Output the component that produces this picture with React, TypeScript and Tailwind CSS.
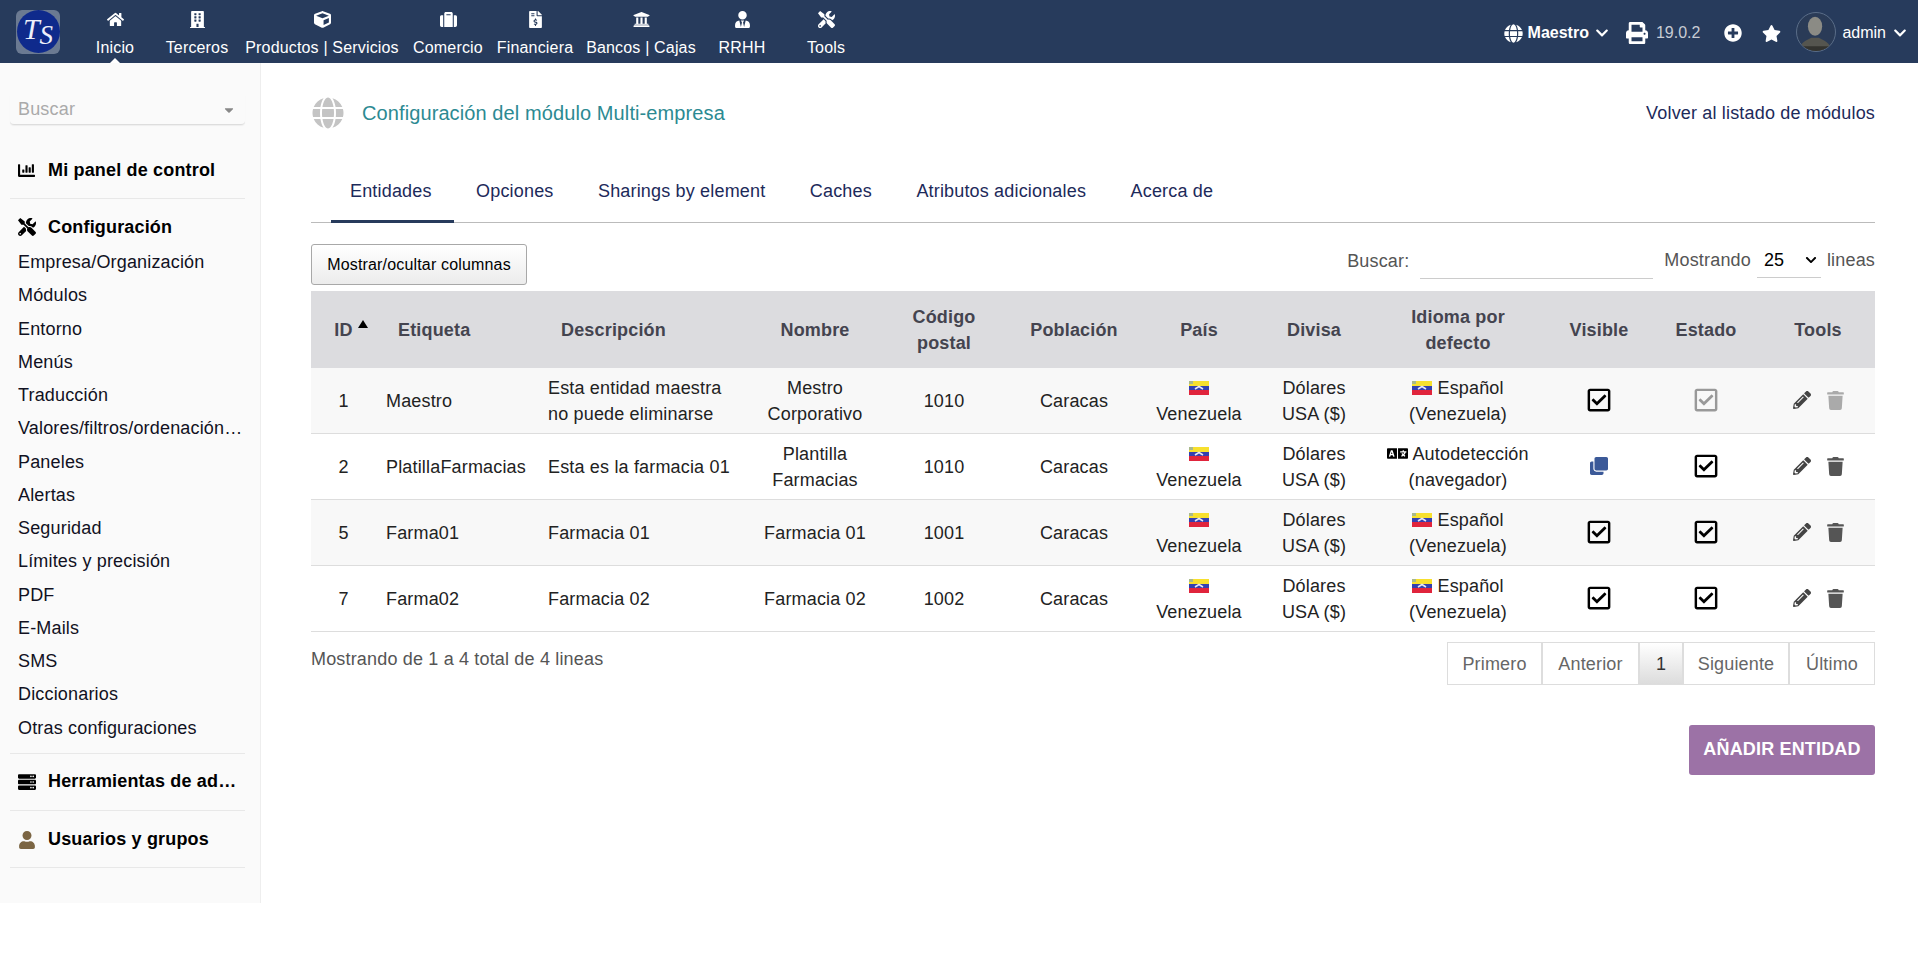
import {
  FaHome, FaBuilding, FaCube, FaSuitcase, FaFileInvoiceDollar, FaUniversity, FaUserTie, FaTools,
  FaGlobe, FaChevronDown, FaPrint, FaPlusCircle, FaStar, FaChartBar, FaServer, FaUser,
  FaCaretDown, FaRegCheckSquare, FaClone, FaPencilAlt, FaTrash, FaLanguage,
} from "react-icons/fa";

const navItems = [
  { label: "Inicio", icon: FaHome, w: "w-[82px]", active: true },
  { label: "Terceros", icon: FaBuilding, w: "w-[82px]" },
  { label: "Productos | Servicios", icon: FaCube, w: "w-[168px]" },
  { label: "Comercio", icon: FaSuitcase, w: "w-[84px]" },
  { label: "Financiera", icon: FaFileInvoiceDollar, w: "w-[90px]" },
  { label: "Bancos | Cajas", icon: FaUniversity, w: "w-[122px]" },
  { label: "RRHH", icon: FaUserTie, w: "w-[80px]" },
  { label: "Tools", icon: FaTools, w: "w-[88px]" },
];

const configLinks = [
  "Empresa/Organización", "Módulos", "Entorno", "Menús", "Traducción", "Valores/filtros/ordenación/búsqueda",
  "Paneles", "Alertas", "Seguridad", "Límites y precisión", "PDF", "E-Mails", "SMS", "Diccionarios", "Otras configuraciones",
];

const tabs = ["Entidades", "Opciones", "Sharings by element", "Caches", "Atributos adicionales", "Acerca de"];

const rows = [
  { id: 1, label: "Maestro", desc: "Esta entidad maestra no puede eliminarse", name: "Mestro Corporativo", zip: "1010", lang: "es", visible: "check", estado: "off", locked: true },
  { id: 2, label: "PlatillaFarmacias", desc: "Esta es la farmacia 01", name: "Plantilla Farmacias", zip: "1010", lang: "auto", visible: "clone", estado: "check", locked: false },
  { id: 5, label: "Farma01", desc: "Farmacia 01", name: "Farmacia 01", zip: "1001", lang: "es", visible: "check", estado: "check", locked: false },
  { id: 7, label: "Farma02", desc: "Farmacia 02", name: "Farmacia 02", zip: "1002", lang: "es", visible: "check", estado: "check", locked: false },
];

const Flag = () => (
  <svg width="20" height="14" viewBox="0 0 20 14" className="inline-block align-[-1px]">
    <rect width="20" height="5" fill="#f7e02e" />
    <rect y="5" width="20" height="4" fill="#3340b0" />
    <rect y="9" width="20" height="5" fill="#e0243c" />
    <rect x="0" y="0" width="4" height="3" fill="#a9b98a" />
    <path d="M6 8 L10 5.5 L14 8" stroke="#e8e8f4" strokeWidth="1.5" fill="none" />
  </svg>
);

const Logo = () => (
  <div className="flex h-11 w-11 items-center justify-center rounded-md bg-[#6b7a92]">
    <div className="flex h-[43px] w-[43px] items-center justify-center rounded-full bg-[#0f2a8c] font-['Liberation_Serif',serif] italic leading-none tracking-normal text-[#eef0fa]">
      <span className="-mt-[6px] text-[30px]">T</span>
      <span className="mt-[8px] text-[27px]">S</span>
    </div>
  </div>
);

const Avatar = () => (
  <div className="h-10 w-10 overflow-hidden rounded-full border border-[#5a6d88] bg-[#2a3b57]">
    <svg viewBox="0 0 40 40" className="h-full w-full">
      <ellipse cx="19" cy="14" rx="7.5" ry="10" fill="#8b8b85" />
      <path d="M3 40 C3 30 10 29 15 26 L23 26 C28 29 35 30 36 40 Z" fill="#55554f" />
      <rect x="3" y="35" width="33" height="5" fill="#33332f" />
    </svg>
  </div>
);

const Sidebar = () => (
  <aside className="h-[840px] w-[261px] shrink-0 border-r border-[#eeeeee] bg-[#fafafa] px-[10px] pt-[32px]">
    <div className="flex h-[30px] w-[235px] items-center justify-between rounded-b-sm border-b border-[#dddddd] pl-2 pr-[9px] shadow-[0_1px_1px_#eeeeee]">
      <span className="text-[#aaaaaa]">Buscar</span>
      <FaCaretDown className="text-[14px] text-[#888888]" />
    </div>
    <div className="mt-[29px] flex h-[45px] w-[235px] items-center border-b border-[#e8e8e8] pb-[11px] pl-2">
      <FaChartBar className="mr-[13px] text-[17px] text-black" />
      <span className="font-bold text-black">Mi panel de control</span>
    </div>
    <div className="w-[235px] border-b border-[#e8e8e8] pb-[8px] pl-2">
      <div className="flex h-[42px] items-center pt-[14px]">
        <FaTools className="mr-[12px] text-[18px] text-black" />
        <span className="font-bold text-black">Configuración</span>
      </div>
      <ul className="mt-[5px]">
        {configLinks.map((l) => (
          <li key={l} className="h-[33.25px] truncate leading-[33px] text-[#111122]">{l}</li>
        ))}
      </ul>
    </div>
    <div className="flex h-[57px] w-[235px] items-center border-b border-[#e8e8e8] pl-2">
      <FaServer className="mr-[12px] shrink-0 text-[18px] text-black" />
      <span className="truncate font-bold text-black">Herramientas de administración</span>
    </div>
    <div className="flex h-[57px] w-[235px] items-center border-b border-[#e8e8e8] pl-2 pt-[2px]">
      <FaUser className="mr-[12px] text-[18px] text-[#7b6543]" />
      <span className="font-bold text-black">Usuarios y grupos</span>
    </div>
  </aside>
);

const StateIcon = ({ kind }: { kind: string }) => {
  if (kind === "clone") return <FaClone className="mx-auto -mt-[2px] text-[18px] text-[#3b5998]" />;
  if (kind === "off") return <FaRegCheckSquare className="mx-auto -mt-[2px] text-[26px] text-[#999999]" />;
  return <FaRegCheckSquare className="mx-auto -mt-[2px] text-[26px] text-black" />;
};

export default function App() {
  return (
    <div className="min-h-[978px] bg-white font-['Liberation_Sans',Arial,sans-serif] text-[18px] tracking-[0.17px]">
      <header className="flex h-[63px] items-center bg-[#273b5c] text-white">
        <div className="ml-4 mr-[14px] shrink-0"><Logo /></div>
        <nav className="flex h-full">
          {navItems.map((n) => (
            <div key={n.label} className={`relative flex h-full shrink-0 flex-col items-center pt-[11px] ${n.w}`}>
              <n.icon className="h-[17px] text-[17px]" />
              <span className="mt-[11px] whitespace-nowrap text-[16px] leading-[18px]">{n.label}</span>
              {n.active && <span className="absolute bottom-0 left-1/2 -ml-[5px] h-0 w-0 border-x-[5px] border-b-[5px] border-x-transparent border-b-white" />}
            </div>
          ))}
        </nav>
        <div className="ml-auto flex items-center pr-[11px] pt-[3px]">
          <FaGlobe className="text-[19px]" />
          <span className="ml-[5px] text-[16px] font-bold tracking-normal">Maestro</span>
          <FaChevronDown className="ml-[6px] text-[14px]" />
          <FaPrint className="ml-[17px] text-[22px]" />
          <span className="ml-[8px] text-[16px] tracking-normal text-[#c8ccd4]">19.0.2</span>
          <FaPlusCircle className="ml-[24px] text-[18px]" />
          <FaStar className="ml-[20px] text-[19px]" />
          <div className="ml-[15px] -mt-[3px]"><Avatar /></div>
          <span className="ml-[6px] text-[16px] tracking-normal">admin</span>
          <FaChevronDown className="ml-[7px] text-[14px]" />
        </div>
      </header>

      <div className="flex">
        <Sidebar />
        <main className="min-w-0 flex-1 pl-[50px] pr-[43px]">
          <div className="mt-[28px] flex h-[44px] items-center justify-between">
            <div className="flex items-center">
              <FaGlobe className="ml-[1px] text-[32px] text-[#c4c4c4]" />
              <span className="ml-[18px] text-[20px] tracking-[0.1px] text-[#2c8a92]">Configuración del módulo Multi-empresa</span>
            </div>
            <span className="text-[#1d2a5a]">Volver al listado de módulos</span>
          </div>

          <div className="mt-[39px] flex h-[49px] border-b border-[#bbbbbb] pl-[20px]">
            {tabs.map((t, i) => (
              <div key={t} className={`-mb-px mr-[3.5px] flex items-center border-b-[3px] pl-[19px] pr-[22px] pb-[12px] text-[#1d2a5a] ${i === 0 ? "border-[#273b5c]" : "border-transparent"}`}>{t}</div>
            ))}
          </div>

          <div className="mt-[21px] flex h-[41px] items-start justify-between">
            <button className="h-[41px] w-[216px] rounded-[3px] border border-[#a8a8a8] bg-gradient-to-b from-white to-[#ececec] text-[16px] text-black">Mostrar/ocultar columnas</button>
            <div className="flex items-center text-[#555555]">
              <span>Buscar:</span>
              <div className="ml-[11px] h-[35px] w-[233px] border-b border-[#cccccc]" />
              <span className="ml-[11px] -mt-[2px]">Mostrando</span>
              <div className="relative ml-[6px] -mt-[2px] flex h-[35px] w-[64px] items-center border-b border-[#cccccc] pl-[7px] text-black">
                25
                <FaChevronDown className="absolute right-[4px] text-[12px] text-black" />
              </div>
              <span className="ml-[6px] -mt-[2px]">lineas</span>
            </div>
          </div>

          <table className="mt-[6px] w-[1564px] table-fixed border-collapse">
            <colgroup>
              {[65, 162, 213, 128, 130, 130, 120, 110, 178, 104, 110, 114].map((w, i) => <col key={i} style={{ width: w }} />)}
            </colgroup>
            <thead>
              <tr className="h-[77px] bg-[#dcdcdf] leading-[26px] text-[#44444f]">
                <th className="relative font-bold">ID<span className="absolute left-[47px] top-[29px] h-0 w-0 border-x-[5px] border-b-[8px] border-x-transparent border-b-black" /></th>
                <th className="pl-[22px] text-left font-bold">Etiqueta</th>
                <th className="pl-[23px] text-left font-bold">Descripción</th>
                <th className="font-bold">Nombre</th>
                <th className="font-bold">Código<br />postal</th>
                <th className="font-bold">Población</th>
                <th className="font-bold">País</th>
                <th className="font-bold">Divisa</th>
                <th className="font-bold">Idioma por<br />defecto</th>
                <th className="font-bold">Visible</th>
                <th className="font-bold">Estado</th>
                <th className="font-bold">Tools</th>
              </tr>
            </thead>
            <tbody>
              {rows.map((r, i) => (
                <tr key={r.id} className={`border-b border-[#dddddd] leading-[26px] text-[#222222] [&>td]:pt-[1px] ${i === 0 ? "h-[65px]" : "h-[66px]"} ${i % 2 === 0 ? "bg-[#f8f8f8]" : "bg-white"}`}>
                  <td className="text-center">{r.id}</td>
                  <td className="pl-[10px]">{r.label}</td>
                  <td className="pl-[10px] pr-[20px]">{r.desc}</td>
                  <td className="px-[10px] text-center">{r.name}</td>
                  <td className="text-center">{r.zip}</td>
                  <td className="text-center">Caracas</td>
                  <td className="text-center"><Flag /><br />Venezuela</td>
                  <td className="text-center">Dólares<br />USA ($)</td>
                  <td className="text-center">
                    {r.lang === "es"
                      ? <><Flag /> Español<br />(Venezuela)</>
                      : <><FaLanguage className="inline-block align-[-4px] text-[21px] text-black" /> Autodetección<br />(navegador)</>}
                  </td>
                  <td className="text-center"><StateIcon kind={r.visible} /></td>
                  <td className="text-center"><StateIcon kind={r.estado} /></td>
                  <td>
                    <div className="-mt-[1px] ml-[2px] flex items-center justify-center gap-[15px]">
                      <FaPencilAlt className="text-[18px] text-[#444444]" />
                      <FaTrash className={`text-[19px] ${r.locked ? "text-[#aaaaaa]" : "text-[#555555]"}`} />
                    </div>
                  </td>
                </tr>
              ))}
            </tbody>
          </table>

          <div className="mt-[10px] flex items-start justify-between">
            <span className="mt-[4px] text-[#555555]">Mostrando de 1 a 4 total de 4 lineas</span>
            <div className="flex h-[43px] border border-[#dddddd] text-[#666666]">
              <span className="flex w-[95px] items-center justify-center border-r-2 border-[#dddddd] pt-[2px]">Primero</span>
              <span className="flex w-[97px] items-center justify-center border-r-2 border-[#dddddd] pt-[2px]">Anterior</span>
              <span className="flex w-[42px] items-center justify-center bg-gradient-to-b from-white to-[#dcdcdc] pt-[2px] text-[#333333]">1</span>
              <span className="flex w-[108px] items-center justify-center border-x-2 border-[#dddddd] pt-[2px]">Siguiente</span>
              <span className="flex w-[84px] items-center justify-center pt-[2px]">Último</span>
            </div>
          </div>

          <div className="mt-[40px] flex justify-end">
            <button className="h-[50px] w-[186px] rounded-[3px] bg-[#9c72a6] font-bold text-white">AÑADIR ENTIDAD</button>
          </div>
        </main>
      </div>
    </div>
  );
}
